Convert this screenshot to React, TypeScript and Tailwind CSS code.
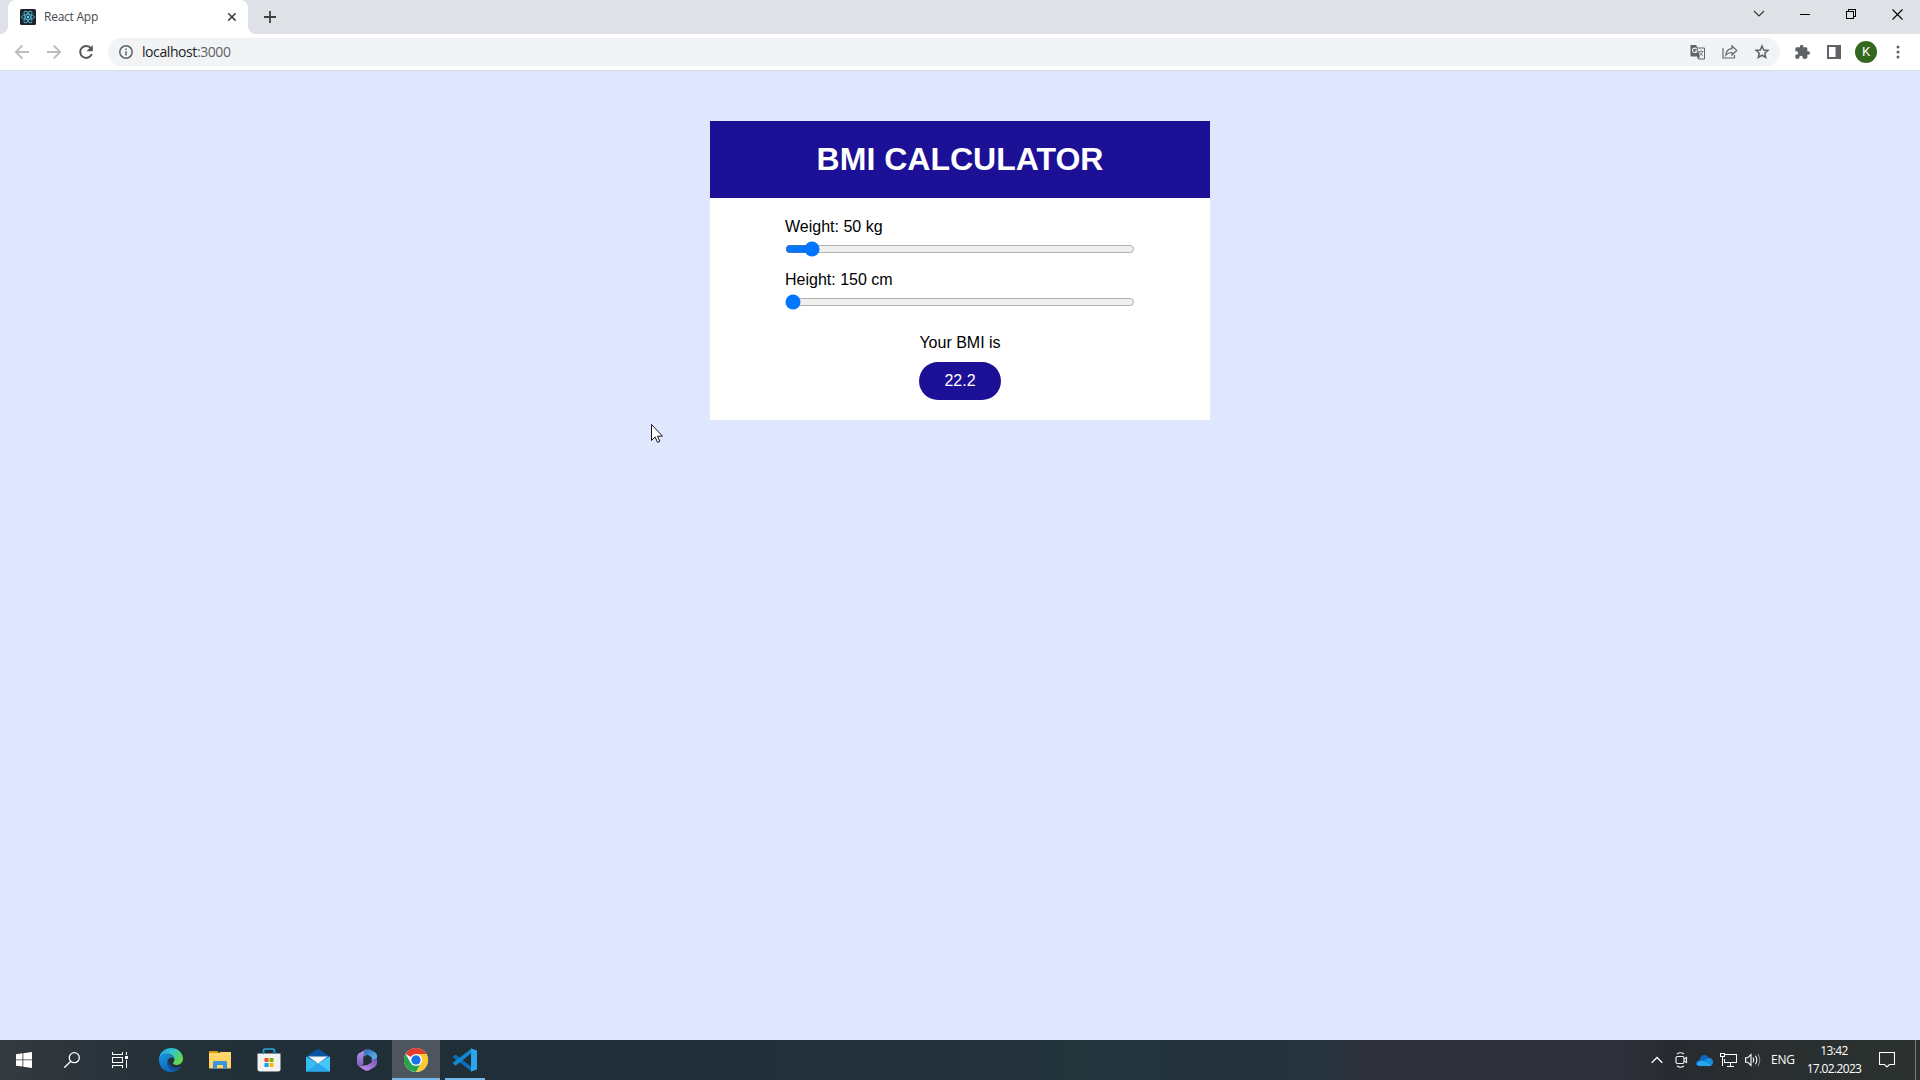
import React from "react";

const MIN_W = 40, MAX_W = 220, MIN_H = 150, MAX_H = 230;

function ReactLogo() {
  return (
    <svg width="16" height="16" viewBox="0 0 16 16">
      <rect width="16" height="16" rx="1.5" fill="#20232a" />
      <g fill="none" stroke="#4fb4cf" strokeWidth=".9">
        <ellipse cx="8" cy="8" rx="6.4" ry="2.5" />
        <ellipse cx="8" cy="8" rx="6.4" ry="2.5" transform="rotate(60 8 8)" />
        <ellipse cx="8" cy="8" rx="6.4" ry="2.5" transform="rotate(120 8 8)" />
      </g>
      <circle cx="8" cy="8" r="1.3" fill="#61dafb" />
    </svg>
  );
}

function TabStrip() {
  return (
    <div className="flex h-[34px] bg-[#dee1e6]">
      <div className="flex h-[34px] w-2 bg-white">
        <div className="h-full w-full rounded-br-lg bg-[#dee1e6]" />
      </div>
      <div className="flex w-60 items-center rounded-t-lg bg-white pl-3 pr-[11px]">
        <ReactLogo />
        <span className="ml-2 flex-1 text-[12px] tracking-[-0.25px] text-[#45494d]">React App</span>
        <svg width="10" height="10" viewBox="0 0 10 10" stroke="#3c4043" strokeWidth="1.5"><path d="M1.2 1.2l7.4 7.4M8.6 1.2L1.2 8.6" /></svg>
      </div>
      <div className="h-[34px] w-2 bg-white">
        <div className="h-full w-full rounded-bl-lg bg-[#dee1e6]" />
      </div>
      <div className="flex items-center pl-2">
        <svg width="12" height="12" viewBox="0 0 12 12" stroke="#3c4043" strokeWidth="1.8"><path d="M6 0v12M0 6h12" /></svg>
      </div>
      <div className="ml-auto flex h-[28px] items-center">
        <div className="flex w-[46px] justify-center">
          <svg width="12" height="8" viewBox="0 0 12 8" fill="none" stroke="#303236" strokeWidth="1.1"><path d="M1 1l5 5 5-5" /></svg>
        </div>
        <div className="flex w-[46px] justify-center"><div className="mt-px h-px w-[10px] bg-black" /></div>
        <div className="flex w-[46px] justify-center">
          <svg width="10" height="10" viewBox="0 0 10 10" fill="none" stroke="#000" shapeRendering="crispEdges"><path d="M.5 2.5h7v7h-7zM2.5 2V.5h7v7H8" /></svg>
        </div>
        <div className="flex w-[46px] justify-center">
          <svg width="11" height="11" viewBox="0 0 11 11" stroke="#000" strokeWidth="1.1"><path d="M.5.5l10 10M10.500.5l-10 10" /></svg>
        </div>
      </div>
    </div>
  );
}

function Arrow({ flip = false }: { flip?: boolean }) {
  return (
    <svg width="16" height="16" viewBox="0 0 16 16" fill="none" stroke="#babcbe" strokeWidth="1.8" className={flip ? "rotate-180" : ""}>
      <path d="M15 8H2M8.300 1.500L1.800 8l6.500 6.500" />
    </svg>
  );
}

function Toolbar() {
  return (
    <div className="flex h-9 items-center bg-white pl-[14px]">
      <Arrow />
      <div className="ml-4"><Arrow flip /></div>
      <svg className="ml-4" width="16" height="16" viewBox="0 0 16 16" fill="none" stroke="#54585d" strokeWidth="2">
        <path d="M13 4.300A6 6 0 1 0 13.800 10" />
        <path d="M14.800.9v6.300H8.500z" fill="#54585d" stroke="none" />
      </svg>
      <div className="ml-[14px] flex h-7 w-[1672px] items-center rounded-full bg-[#f1f3f4] pl-[11px] pr-[10px]">
        <svg width="14" height="14" viewBox="0 0 14 14" fill="none" stroke="#5f6368" strokeWidth="1.5"><circle cx="7" cy="7" r="6.200" /><path d="M7 6.300v4.200M7 3.500v1.600" /></svg>
        <span className="-mt-px ml-[9px] flex-1 text-[14px] tracking-[-0.42px] text-[#202124]">localhost<span className="text-[#5f6368]">:3000</span></span>
        <svg width="15" height="15" viewBox="0 0 15 15">
          <path d="M5 3h9.500v11H8.500z" fill="#f1f3f4" stroke="#5f6368" />
          <path d="M.5 0h5.800l3.700 11.500H1.500Q.5 11.500.5 10.500z" fill="#5f6368" />
          <path d="M6.800 4.300A2.300 2.300 0 1 0 7 6H4.800" fill="none" stroke="#f1f3f4" strokeWidth="1.100" />
          <path d="M8.500 6.500h5M11 5.300v1.200M12.500 6.500c-.4 2-1.500 3.300-3 4.300M9.300 7.300l3.700 3.900" fill="none" stroke="#777b80" strokeWidth=".9" />
          <path d="M7 11.500h3L8.500 14z" fill="#5f6368" />
        </svg>
        <svg className="ml-[17px]" width="16" height="16" viewBox="0 0 16 16" fill="none" stroke="#63676c" strokeWidth="1.200">
          <path d="M1 4v10h11.500v-3M10 2l4.800 4.500L10 11V8.500c-3 0-4.800.8-6.200 2.700.3-3.700 2.300-6.200 6.200-6.500z" />
        </svg>
        <svg className="ml-[16px]" width="16" height="16" viewBox="0 0 16 16" fill="none" stroke="#5f6368" strokeWidth="1.500">
          <path d="M8 2l1.700 4 4.300.4-3.250 2.850.95 4.250L8 11.250 4.300 13.500l.95-4.250L2 6.400 6.300 6z" />
        </svg>
      </div>
      <svg className="ml-[14px]" width="16" height="16" viewBox="0 0 24 24" fill="#5f6368"><path d="M21.500 11H20V7a2 2 0 0 0-2-2h-4V3.500a2.500 2.500 0 0 0-5 0V5H4a2 2 0 0 0-2 2v3.800h1.500a2.700 2.700 0 0 1 0 5.400H2V20c0 1.100.9 2 2 2h3.800v-1.500a2.700 2.700 0 0 1 5.400 0V22H18a2 2 0 0 0 2-2v-4h1.500a2.500 2.500 0 0 0 0-5z" /></svg>
      <svg className="ml-[17px]" width="14" height="14" viewBox="0 0 14 14" fill="#5f6368"><path fillRule="evenodd" d="M0 0h14v14H0zM2 2v10h6.500V2z" /></svg>
      <div className="ml-[14px] flex size-[22px] items-center justify-center rounded-full bg-[#33691e] font-[Roboto,sans-serif] text-[13px] text-white">K</div>
      <svg className="ml-[19px]" width="4" height="14" viewBox="0 0 4 14" fill="#5f6368"><circle cx="2" cy="2" r="1.500" /><circle cx="2" cy="7" r="1.500" /><circle cx="2" cy="12" r="1.500" /></svg>
    </div>
  );
}

function Slider({ label, min, max, value, onChange }: { label: string; min: number; max: number; value: number; onChange: (n: number) => void }) {
  return (
    <div className="mb-[14px] flex flex-col gap-[5px]">
      <label>{label}</label>
      <input type="range" className="h-4 w-[350px] accent-[#0075ff]" min={min} max={max} value={value} onChange={(e) => onChange(Number(e.target.value))} />
    </div>
  );
}

function Calculator() {
  const [weight, setWeight] = React.useState(50);
  const [height, setHeight] = React.useState(150);
  const bmi = (weight / (height / 100) ** 2).toFixed(1);
  return (
    <div className="w-[500px] bg-white font-['Liberation_Sans',Arial,sans-serif] text-[16px] leading-[18px] text-black">
      <h1 className="bg-[#1c1096] py-5 text-center text-[32px] leading-[37px] font-bold text-white">BMI CALCULATOR</h1>
      <div className="px-[75px] py-5">
        <Slider label={`Weight: ${weight} kg`} min={MIN_W} max={MAX_W} value={weight} onChange={setWeight} />
        <Slider label={`Height: ${height} cm`} min={MIN_H} max={MAX_H} value={height} onChange={setHeight} />
        <div className="mt-6 flex flex-col items-center gap-[10px]">
          <p>Your BMI is</p>
          <p className="rounded-[20px] bg-[#1c1096] px-[25px] py-[10px] text-white">{bmi}</p>
        </div>
      </div>
    </div>
  );
}

function EdgeIcon() {
  return (
    <svg width="24" height="24" viewBox="0 0 24 24">
      <defs>
        <linearGradient id="eg" x1="0" y1="0" x2="1" y2=".5"><stop offset="0" stopColor="#1f9bde" /><stop offset=".5" stopColor="#2fc5d4" /><stop offset="1" stopColor="#63d84c" /></linearGradient>
        <linearGradient id="eb" x1="0" y1="0" x2=".6" y2="1"><stop offset="0" stopColor="#1b95e0" /><stop offset="1" stopColor="#0d62b8" /></linearGradient>
      </defs>
      <path d="M0 11C.5 4 6 0 12 0c7 0 12 5 12 10.500 0 4-3 6.500-6.500 6.500-2.500 0-4-1-3.500-2.200.5-.8 1.500-1.500 1.500-3.300C15.500 8 11.500 5.500 7.500 5.800 4 6 1.500 8 0 11z" fill="url(#eg)" />
      <path d="M0 12C0 8.500 3.500 6 7.500 6c4.500 0 7.500 2.500 7.800 5-1-1.300-2.500-1.800-4-1.200C8 11 8 15 10 17.500c2.500 3.500 7.500 4 12 1C20 22 16.500 24 12 24 5 24 0 18.500 0 12z" fill="url(#eb)" />
      <path d="M8.800 12c-1.700 4 .5 9.500 6.700 11.500 2.500-.8 5-2.500 6.500-5-5 2.500-12 .8-13.200-6.500z" fill="#124f92" />
    </svg>
  );
}

function FolderIcon() {
  return (
    <svg width="22" height="18" viewBox="0 0 22 18">
      <path d="M0 0h8.500l1.500 2H0z" fill="#e29a0c" /><path d="M0 2h10l1.500-1H22v16.500H0z" fill="#ffd664" />
      <path d="M0 3h22v.8H0z" fill="#ffdf85" />
      <path d="M4 18v-6.500q0-1.500 1.500-1.500h11q1.500 0 1.500 1.500V18h-4v-4H8v4z" fill="#3a93dd" />
    </svg>
  );
}

function StoreIcon() {
  return (
    <svg width="24" height="24" viewBox="0 0 24 24">
      <path d="M6.500 6V2.500Q6.500 1 8 1h8q1.500 0 1.500 1.500V6" fill="none" stroke="#27a5e5" strokeWidth="1.700" />
      <path d="M.5 5.500h23V21q0 2.500-2.500 2.500H3Q.5 23.500.5 21z" fill="#f2f2f2" />
      <path d="M6.500 3.500V6M17.500 3.500V6" stroke="#1684cb" strokeWidth="1.700" />
      <path fill="#f05022" d="M7.500 10h4v4h-4z" /><path fill="#7fba00" d="M12.500 10h4v4h-4z" /><path fill="#00a4ef" d="M7.500 15h4v4h-4z" /><path fill="#ffb900" d="M12.500 15h4v4h-4z" />
    </svg>
  );
}

function MailIcon() {
  return (
    <svg width="24" height="23" viewBox="0 0 24 23">
      <path d="M0 7.500L10.800.5q1.200-.8 2.400 0L24 7.500V12H0z" fill="#0754a2" />
      <path d="M0 7.500l12 7L24 7.500v15H0z" fill="#36bdf3" />
      <path d="M12 14.500L24 7.500v15z" fill="#45c8f5" />
      <path d="M0 22.500l12-8 12 8z" fill="#2aa6ec" />
      <path d="M2 7.500h20l-10 7z" fill="#f3f5f8" />
    </svg>
  );
}

function OfficeIcon() {
  return (
    <svg width="22" height="24" viewBox="0 0 22 24">
      <defs>
        <linearGradient id="op" x1="0" y1="0" x2="0" y2="1"><stop offset="0" stopColor="#c49aea" /><stop offset="1" stopColor="#7a5cc0" /></linearGradient>
        <linearGradient id="oc" x1="0" y1="0" x2="1" y2="1"><stop offset="0" stopColor="#2d5fb4" /><stop offset="1" stopColor="#6fd0f6" /></linearGradient>
        <linearGradient id="ov" x1="1" y1="0" x2="0" y2="1"><stop offset="0" stopColor="#6a55b8" /><stop offset="1" stopColor="#cb95ee" /></linearGradient>
      </defs>
      <path d="M11 1L3 5.300Q1 6.500 1 8.800v6.400Q1 17.500 3 18.600l3.500-1.400Q7.500 16.500 7.500 15V8.500z" fill="url(#op)" />
      <path d="M8 3.500Q11.500 0 15 2l4 2.300Q21 5.500 21 8v7l-5.500-2V9.500L11.500 6.800 7.500 9z" fill="url(#oc)" />
      <path d="M15.500 12L21 9.500V15q0 2.500-2 3.700l-5.800 3.500q-2.200 1.300-4.400 0L3 18.600l8.500-1.900 4-2.700z" fill="url(#ov)" />
      <path d="M11.500 7l4 2.300v5L11.500 16.700l-4-2.200V9.300z" fill="#212f38" />
    </svg>
  );
}

function ChromeIcon() {
  return (
    <svg width="24" height="24" viewBox="0 0 24 24">
      <circle cx="12" cy="12" r="12" fill="#fff" />
      <path d="M12 12L1.600 6A12 12 0 0 1 22.400 6H12z" fill="#e33b2e" />
      <path d="M1.600 6A12 12 0 0 0 12 24l5.200-9L12 12 6.800 15z" fill="#2ba24c" />
      <path d="M22.400 6A12 12 0 0 1 12 24l5.200-9a6 6 0 0 0-1-7L12 6z" fill="#fcc934" />
      <circle cx="12" cy="12" r="6" fill="#fff" /><circle cx="12" cy="12" r="4.700" fill="#1a73e8" />
    </svg>
  );
}

function CodeIcon() {
  return (
    <svg width="24" height="24" viewBox="0 0 24 24">
      <path d="M.3 8.400l1.500-1.500q.7-.5 1.400 0L18 18.500V23L.4 9.800q-.7-.7-.1-1.400z" fill="#0a6fb9" />
      <path d="M.3 15.700l1.500 1.500q.7.500 1.400 0L18 5.500V1L.4 14.200q-.7.700-.1 1.500z" fill="#1688cf" />
      <path d="M17 0l7 2.500v19L17 24c.8-.3 1-.8 1-1.500v-21C18 .8 17.800.3 17 0z" fill="#2ba5ee" />
    </svg>
  );
}

function Taskbar() {
  return (
    <div className="flex h-10 items-stretch bg-[linear-gradient(90deg,#353a3e_0%,#28333a_6%,#212f38_13%,#202e37_25%,#22303a_45%,#24323b_52%,#23363d_58%,#25323c_64%,#253440_69%,#2d313b_71%,#2f323b_84%,#272a30_87%,#292d30_90%,#2b322f_100%)] text-white">
      <div className="flex w-12 items-center justify-center">
        <svg width="16" height="16" viewBox="0 0 16 16" fill="#fff"><path d="M0 2.200L6.500 1.300v6.200H0zM7.300 1.200L16 0v7.500H7.300zM0 8.300h6.500v6.300L0 13.700zM7.300 8.300H16V16l-8.700-1.200z" /></svg>
      </div>
      <div className="flex w-12 items-center justify-center">
        <svg width="16" height="16" viewBox="0 0 16 16" fill="none" stroke="#fff" strokeWidth="1.300"><circle cx="10.300" cy="5.700" r="5" /><path d="M6.800 9.200L.3 15.700" /></svg>
      </div>
      <div className="flex w-12 items-center justify-center">
        <svg width="16" height="16" viewBox="0 0 16 16" fill="none" stroke="#fff" shapeRendering="crispEdges"><path d="M.5 0v2.500h10V0M.5 5.500h10v5H.5zM.5 16v-2.500h10V16M14.500 0v3M14.500 8v8" /><path d="M13 4h3v3h-3z" fill="#fff" stroke="none" /></svg>
      </div>
      <div className="flex w-[54px] items-center justify-center"><EdgeIcon /></div>
      <div className="flex w-[44px] items-center justify-center"><FolderIcon /></div>
      <div className="flex w-[54px] items-center justify-center pb-px"><StoreIcon /></div>
      <div className="flex w-[44px] items-center justify-center"><MailIcon /></div>
      <div className="flex w-[52px] items-center justify-center pl-[2px]"><OfficeIcon /></div>
      <div className="flex w-12 items-center justify-center border-b-2 border-[#76b9ed] bg-[#4c565c] pt-[2px]"><ChromeIcon /></div>
      <div className="ml-[5px] flex w-10 items-center justify-center border-b-2 border-[#76b9ed] pt-[2px]"><CodeIcon /></div>
      <div className="ml-auto flex items-center">
        <svg width="12" height="8" viewBox="0 0 12 8" fill="none" stroke="#fff" strokeWidth="1.300"><path d="M.7 6.800L6 1.500l5.300 5.300" /></svg>
        <svg className="ml-[12px]" width="13" height="16" viewBox="0 0 13 16" fill="none" stroke="#eee" strokeWidth="1.200"><path d="M2 2Q5.500-.5 9 2M2 14q3.500 2.500 7 0" /><rect x="1" y="4.500" width="8" height="7" rx="1.500" /><path d="M9 7l2.500-1.500v5L9 9" /></svg>
        <svg className="ml-[8px]" width="17" height="11" viewBox="0 0 17 11"><path d="M3.500 5.500C3.500 2 6 0 8.500 0c2 0 3.500 1 4.200 3C15.500 3 17 5 17 7.200 17 9.500 15.500 11 13.500 11H3.500C1.500 11 0 9.800 0 8s1.500-3 3.500-2.500z" fill="#0e65bd" /><path d="M.5 9.300C2 6 5 4.600 8 6l7.800 4C15 10.700 14.500 11 13.500 11H3.500q-2 0-3-1.700z" fill="#29a7ed" /><path d="M8 6c2-2 4-3.300 5.500-3C15.500 3.300 17 5 17 7.200c0 1-.4 2.200-1.200 2.800z" fill="#1490df" /></svg>
        <svg className="ml-[7px]" width="17" height="14" viewBox="0 0 17 14" fill="none" stroke="#fff" shapeRendering="crispEdges"><path d="M5 1.500h11.500v8h-12V6M10.500 10v3M7 13.500h7M.5.5h4v3h-4zM2.500 4v9" /></svg>
        <svg className="ml-[8px]" width="17" height="14" viewBox="0 0 17 14" fill="none" stroke="#fff" strokeWidth="1.100"><path d="M.6 4.800h2L6 1.500v11L2.600 9.200h-2zM8 4.500q1.500 2.500 0 5M10.500 2.800q2.500 4.200 0 8.400" /><path d="M13 1q3.500 6 0 12" stroke="#858a8b" /></svg>
        <span className="ml-[9px] w-[24px] text-[12px] tracking-[-0.2px]">ENG</span>
        <div className="ml-[11px] flex w-[56px] flex-col items-center text-[12px] leading-[18px] tracking-[-0.65px] whitespace-nowrap"><span>13:42</span><span>17.02.2023</span></div>
        <svg className="ml-[17px]" width="16" height="16" viewBox="0 0 16 16" fill="none" stroke="#fff" strokeWidth="1.100"><path d="M.5.500h15v12h-5L8 15l-2.500-2.500h-5z" /></svg>
        <div className="ml-[20px] mr-[4px] h-10 w-px bg-[#777b79]" />
      </div>
    </div>
  );
}

export default function App() {
  return (
    <div className="relative flex h-[1080px] w-[1920px] flex-col overflow-hidden bg-[#dfe7ff] font-['Open_Sans','Noto_Sans',sans-serif]">
      <TabStrip />
      <Toolbar />
      <main className="flex flex-1 items-start justify-center border-t border-[#dadce5] pt-[50px]">
        <Calculator />
      </main>
      <Taskbar />
      <svg className="absolute left-[651px] top-[424px]" width="12" height="19" viewBox="0 0 12 19"><path d="M.5.500v16l3.700-3.500 2.300 5.400 2.300-1-2.300-5.200h5z" fill="#fff" stroke="#15171f" /></svg>
    </div>
  );
}
